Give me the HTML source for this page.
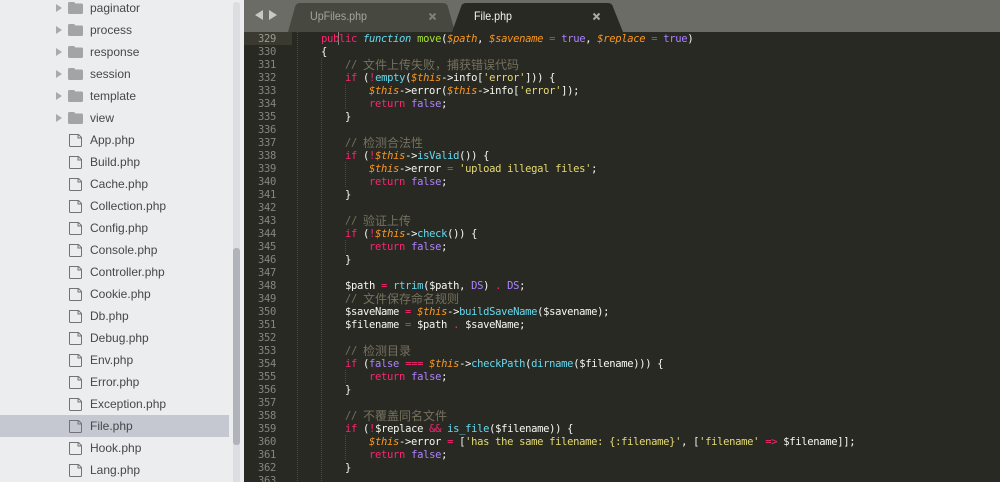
<!DOCTYPE html>
<html><head><meta charset="utf-8"><style>
html,body{margin:0;padding:0;background:#ecedef}
#r{position:relative;width:1000px;height:482px;overflow:hidden;background:#ecedef}
.row{position:absolute;left:0;width:229px;height:22px;font:12px/22px "Liberation Sans",sans-serif;color:#45474a}
.row span{position:absolute;left:90px;top:0;white-space:nowrap}
.row svg{position:absolute;left:54px;top:0}
#sel{position:absolute;left:0;top:415px;width:229px;height:22px;background:#c5c8d0}
#track{position:absolute;left:233px;top:2px;width:7px;height:480px;background:#dcdee1;border-radius:3px 3px 0 0}
#thumb{position:absolute;left:233px;top:248px;width:7px;height:197px;background:#b0b3ba;border-radius:3px}
#ed{position:absolute;left:244px;top:32px;width:756px;height:450px;background:#282923}
#bar{position:absolute;left:244px;top:0;width:756px;height:32px;background:#6b6c66}
.hl{position:absolute;left:244px;top:32px;width:48px;height:13px;background:#3b3a30}
.n{position:absolute;left:258px;width:24px;height:13px;margin-top:1px;font:10.5px/13px "DejaVu Sans Mono",monospace;letter-spacing:-.32px;color:#85867f;white-space:pre}
.l{position:absolute;left:297px;height:13px;margin-top:1px;font:10.5px/13px "DejaVu Sans Mono",monospace;letter-spacing:-.32px;color:#f8f8f2;white-space:pre}
.k{color:#f92672}.f{color:#66d9ef;font-style:italic}.g{color:#a6e22e}.v{color:#fd971f;font-style:italic}.p{color:#ae81ff}.c{color:#75715e;position:relative;top:-2px}.s{color:#e6db74}.b{color:#66d9ef}
.z{font:12px/13px "Noto Sans CJK SC","WenQuanYi Zen Hei",sans-serif;letter-spacing:0;position:relative;top:1px}
.gd{position:absolute;width:1px;background:repeating-linear-gradient(to bottom,#4a4b44 0 1px,transparent 1px 2px)}
.t{position:absolute;top:0;font:12px/32px "Liberation Sans",sans-serif;white-space:nowrap;transform:scaleX(.89);transform-origin:0 0}
</style></head><body><div id="r">
<svg width="0" height="0" style="position:absolute"><defs>
<symbol id="fo" viewBox="0 0 36 22"><path d="M2 7L8 11L2 15Z" fill="#a9aaac"/><path d="M14 6.500a1.500 1.500 0 0 1 1.500-1.500H20l1.500 1.500h6a1.500 1.500 0 0 1 1.500 1.500v7.500a1.500 1.500 0 0 1-1.500 1.500h-12a1.500 1.500 0 0 1-1.500-1.500z" fill="#a3a4a6"/></symbol>
<symbol id="fi" viewBox="0 0 36 22"><path d="M15.500 5.500H24.500L27.500 8.500V16.500Q27.500 17.500 26.500 17.500H16.500Q15.500 17.500 15.500 16.500ZM24 5.500V9H27.500" fill="none" stroke="#727376" stroke-width="1"/></symbol>
</defs></svg>

<div id="sel"></div>
<div id="track"></div><div id="thumb"></div>

<div class="row" style="top:-3px"><svg width="36" height="22"><use href="#fo"/></svg><span>paginator</span></div>
<div class="row" style="top:19px"><svg width="36" height="22"><use href="#fo"/></svg><span>process</span></div>
<div class="row" style="top:41px"><svg width="36" height="22"><use href="#fo"/></svg><span>response</span></div>
<div class="row" style="top:63px"><svg width="36" height="22"><use href="#fo"/></svg><span>session</span></div>
<div class="row" style="top:85px"><svg width="36" height="22"><use href="#fo"/></svg><span>template</span></div>
<div class="row" style="top:107px"><svg width="36" height="22"><use href="#fo"/></svg><span>view</span></div>
<div class="row" style="top:129px"><svg width="36" height="22"><use href="#fi"/></svg><span>App.php</span></div>
<div class="row" style="top:151px"><svg width="36" height="22"><use href="#fi"/></svg><span>Build.php</span></div>
<div class="row" style="top:173px"><svg width="36" height="22"><use href="#fi"/></svg><span>Cache.php</span></div>
<div class="row" style="top:195px"><svg width="36" height="22"><use href="#fi"/></svg><span>Collection.php</span></div>
<div class="row" style="top:217px"><svg width="36" height="22"><use href="#fi"/></svg><span>Config.php</span></div>
<div class="row" style="top:239px"><svg width="36" height="22"><use href="#fi"/></svg><span>Console.php</span></div>
<div class="row" style="top:261px"><svg width="36" height="22"><use href="#fi"/></svg><span>Controller.php</span></div>
<div class="row" style="top:283px"><svg width="36" height="22"><use href="#fi"/></svg><span>Cookie.php</span></div>
<div class="row" style="top:305px"><svg width="36" height="22"><use href="#fi"/></svg><span>Db.php</span></div>
<div class="row" style="top:327px"><svg width="36" height="22"><use href="#fi"/></svg><span>Debug.php</span></div>
<div class="row" style="top:349px"><svg width="36" height="22"><use href="#fi"/></svg><span>Env.php</span></div>
<div class="row" style="top:371px"><svg width="36" height="22"><use href="#fi"/></svg><span>Error.php</span></div>
<div class="row" style="top:393px"><svg width="36" height="22"><use href="#fi"/></svg><span>Exception.php</span></div>
<div class="row" style="top:415px"><svg width="36" height="22"><use href="#fi"/></svg><span>File.php</span></div>
<div class="row" style="top:437px"><svg width="36" height="22"><use href="#fi"/></svg><span>Hook.php</span></div>
<div class="row" style="top:459px"><svg width="36" height="22"><use href="#fi"/></svg><span>Lang.php</span></div>

<div id="bar"></div>
<svg style="position:absolute;left:244px;top:0" width="400" height="32">
<path d="M11 15L19 10V20Z" fill="#c8c8c4"/><path d="M25 10L33 15L25 20Z" fill="#c8c8c4"/>
<path d="M44 32L51 7Q52 3 56 3H199Q203 3 204 7L211 32Z" fill="#474840"/>
<path d="M208 32L217 7Q218 3 222 3H364Q368 3 369 7L379 32Z" fill="#282923"/>
<path d="M185.500 13.500L191.500 19.500M191.500 13.500L185.500 19.500" stroke="#7f807a" stroke-width="2"/>
<path d="M349.500 13.500L355.500 19.500M355.500 13.500L349.500 19.500" stroke="#a8a8a4" stroke-width="2"/>
</svg>
<div class="t" style="left:310px;color:#a4a5a0">UpFiles.php</div>
<div class="t" style="left:474px;color:#f4f4f0">File.php</div>

<div id="ed"></div>
<div class="hl"></div>
<div class="gd" style="left:297px;top:32px;height:450px"></div>
<div class="gd" style="left:321px;top:58px;height:424px"></div>
<div class="gd" style="left:345px;top:84px;height:26px"></div>
<div class="gd" style="left:345px;top:162px;height:26px"></div>
<div class="gd" style="left:345px;top:240px;height:13px"></div>
<div class="gd" style="left:345px;top:370px;height:13px"></div>
<div class="gd" style="left:345px;top:435px;height:26px"></div>
<div style="position:absolute;left:338px;top:32px;width:1px;height:13px;background:#8a8a80"></div>

<div class="n" style="top:32px;color:#9a9a90">329</div><div class="n" style="top:45px">330</div><div class="n" style="top:58px">331</div><div class="n" style="top:71px">332</div><div class="n" style="top:84px">333</div><div class="n" style="top:97px">334</div><div class="n" style="top:110px">335</div><div class="n" style="top:123px">336</div><div class="n" style="top:136px">337</div><div class="n" style="top:149px">338</div><div class="n" style="top:162px">339</div><div class="n" style="top:175px">340</div><div class="n" style="top:188px">341</div><div class="n" style="top:201px">342</div><div class="n" style="top:214px">343</div><div class="n" style="top:227px">344</div><div class="n" style="top:240px">345</div><div class="n" style="top:253px">346</div><div class="n" style="top:266px">347</div><div class="n" style="top:279px">348</div><div class="n" style="top:292px">349</div><div class="n" style="top:305px">350</div><div class="n" style="top:318px">351</div><div class="n" style="top:331px">352</div><div class="n" style="top:344px">353</div><div class="n" style="top:357px">354</div><div class="n" style="top:370px">355</div><div class="n" style="top:383px">356</div><div class="n" style="top:396px">357</div><div class="n" style="top:409px">358</div><div class="n" style="top:422px">359</div><div class="n" style="top:435px">360</div><div class="n" style="top:448px">361</div><div class="n" style="top:461px">362</div><div class="n" style="top:474px">363</div>

<div class="l" style="top:32px">    <span class="k">public</span> <span class="f">function</span> <span class="g">move</span>(<span class="v">$path</span>, <span class="v">$savename</span> <span class="k">=</span> <span class="p">true</span>, <span class="v">$replace</span> <span class="k">=</span> <span class="p">true</span>)</div>
<div class="l" style="top:45px">    {</div>
<div class="l" style="top:58px">        <span class="c">// <span class="z">文件上传失败，捕获错误代码</span></span></div>
<div class="l" style="top:71px">        <span class="k">if</span> (<span class="k">!</span><span class="b">empty</span>(<span class="v">$this</span>-&gt;info[<span class="s">'error'</span>])) {</div>
<div class="l" style="top:84px">            <span class="v">$this</span>-&gt;error(<span class="v">$this</span>-&gt;info[<span class="s">'error'</span>]);</div>
<div class="l" style="top:97px">            <span class="k">return</span> <span class="p">false</span>;</div>
<div class="l" style="top:110px">        }</div>
<div class="l" style="top:136px">        <span class="c">// <span class="z">检测合法性</span></span></div>
<div class="l" style="top:149px">        <span class="k">if</span> (<span class="k">!</span><span class="v">$this</span>-&gt;<span class="b">isValid</span>()) {</div>
<div class="l" style="top:162px">            <span class="v">$this</span>-&gt;error <span class="k">=</span> <span class="s">'upload illegal files'</span>;</div>
<div class="l" style="top:175px">            <span class="k">return</span> <span class="p">false</span>;</div>
<div class="l" style="top:188px">        }</div>
<div class="l" style="top:214px">        <span class="c">// <span class="z">验证上传</span></span></div>
<div class="l" style="top:227px">        <span class="k">if</span> (<span class="k">!</span><span class="v">$this</span>-&gt;<span class="b">check</span>()) {</div>
<div class="l" style="top:240px">            <span class="k">return</span> <span class="p">false</span>;</div>
<div class="l" style="top:253px">        }</div>
<div class="l" style="top:279px">        $path <span class="k">=</span> <span class="b">rtrim</span>($path, <span class="p">DS</span>) <span class="k">.</span> <span class="p">DS</span>;</div>
<div class="l" style="top:292px">        <span class="c">// <span class="z">文件保存命名规则</span></span></div>
<div class="l" style="top:305px">        $saveName <span class="k">=</span> <span class="v">$this</span>-&gt;<span class="b">buildSaveName</span>($savename);</div>
<div class="l" style="top:318px">        $filename <span class="k">=</span> $path <span class="k">.</span> $saveName;</div>
<div class="l" style="top:344px">        <span class="c">// <span class="z">检测目录</span></span></div>
<div class="l" style="top:357px">        <span class="k">if</span> (<span class="p">false</span> <span class="k">===</span> <span class="v">$this</span>-&gt;<span class="b">checkPath</span>(<span class="b">dirname</span>($filename))) {</div>
<div class="l" style="top:370px">            <span class="k">return</span> <span class="p">false</span>;</div>
<div class="l" style="top:383px">        }</div>
<div class="l" style="top:409px">        <span class="c">// <span class="z">不覆盖同名文件</span></span></div>
<div class="l" style="top:422px">        <span class="k">if</span> (<span class="k">!</span>$replace <span class="k">&amp;&amp;</span> <span class="b">is_file</span>($filename)) {</div>
<div class="l" style="top:435px">            <span class="v">$this</span>-&gt;error <span class="k">=</span> [<span class="s">'has the same filename: {:filename}'</span>, [<span class="s">'filename'</span> <span class="k">=&gt;</span> $filename]];</div>
<div class="l" style="top:448px">            <span class="k">return</span> <span class="p">false</span>;</div>
<div class="l" style="top:461px">        }</div>
</div></body></html>
